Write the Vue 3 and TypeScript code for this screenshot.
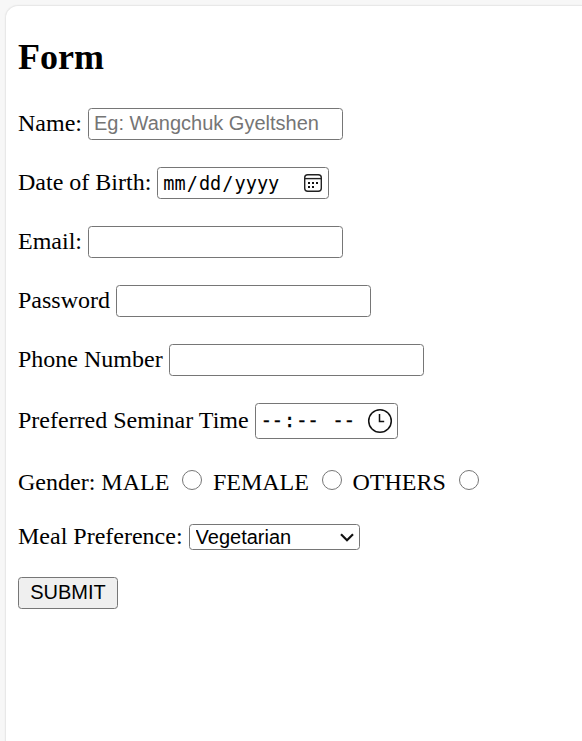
<script setup lang="ts">
import { ref } from 'vue'

interface TextField {
  id: string
  label: string
  type: string
}

const name = ref('')
const gender = ref('')
const meal = ref('Vegetarian')
const values = ref<Record<string, string>>({ email: '', password: '', phone: '' })

const fields: TextField[] = [
  { id: 'email', label: 'Email:', type: 'email' },
  { id: 'password', label: 'Password', type: 'password' },
  { id: 'phone', label: 'Phone Number', type: 'tel' },
]
const genders = ['MALE', 'FEMALE', 'OTHERS']
</script>

<template>
  <main class="page">
    <form class="card" @submit.prevent>
      <h2 class="title">Form</h2>

      <div class="row">
        <label class="caption" for="name">Name:</label>
        <input id="name" v-model="name" class="box text" type="text" placeholder="Eg: Wangchuk Gyeltshen" />
      </div>

      <div class="row">
        <label class="caption">Date of Birth:</label>
        <div class="box date">
          <span class="part">mm</span><span>/</span><span class="part">dd</span><span>/</span><span class="part">yyyy</span>
          <svg class="calendar" viewBox="0 0 20 20" width="20" height="20">
            <rect x="1.7" y="1.7" width="16.6" height="16.6" rx="3" fill="none" stroke="#222" stroke-width="1.4" />
            <path d="M2 5.6H18" stroke="#222" stroke-width="1.4" />
            <g fill="#111">
              <rect x="5" y="9" width="2" height="2" />
              <rect x="9" y="9" width="2" height="2" />
              <rect x="13" y="9" width="2" height="2" />
              <rect x="5" y="13" width="2" height="2" />
              <rect x="9" y="13" width="2" height="2" />
            </g>
          </svg>
        </div>
      </div>

      <div v-for="field in fields" :key="field.id" class="row">
        <label class="caption" :for="field.id">{{ field.label }}</label>
        <input :id="field.id" v-model="values[field.id]" class="box text" :type="field.type" />
      </div>

      <div class="row time-row">
        <label class="caption">Preferred Seminar Time</label>
        <div class="box time">
          <span class="part">--</span><span>:</span><span class="part">--</span><span class="part meridiem">--</span>
          <svg class="clock" viewBox="0 0 26 26" width="26" height="26">
            <circle cx="13" cy="13" r="11.3" fill="none" stroke="#111" stroke-width="1.5" />
            <path d="M12.5 6V13.5H17.2" fill="none" stroke="#111" stroke-width="1.5" />
          </svg>
        </div>
      </div>

      <div class="row gender-row">
        <span>Gender:</span>
        <label v-for="option in genders" :key="option" class="option">
          {{ option }}
          <input v-model="gender" class="radio" type="radio" name="gender" :value="option" />
        </label>
      </div>

      <div class="row meal-row">
        <label class="caption" for="meal">Meal Preference:</label>
        <div class="select-wrap">
          <select id="meal" v-model="meal" class="box select">
            <option>Vegetarian</option>
            <option>Non-Vegetarian</option>
          </select>
          <svg class="chevron" viewBox="0 0 14 10" width="14" height="10">
            <path d="M1 1.3L7 7.3L13 1.3" fill="none" stroke="#111" stroke-width="2.2" />
          </svg>
        </div>
      </div>

      <div class="row">
        <button class="box submit" type="submit">SUBMIT</button>
      </div>
    </form>
  </main>
</template>

<style>
body {
  background: #f7f7f7;
}
</style>

<style scoped>
.page {
  box-sizing: border-box;
  height: 741px;
  padding: 5px 0 0 5px;
  overflow: hidden;
  font-family: "Liberation Serif", "Times New Roman", serif;
  font-size: 24px;
  color: #000;
}
.card {
  box-sizing: border-box;
  display: flex;
  flex-direction: column;
  gap: 27px;
  height: 760px;
  padding: 31px 0 0 12px;
  background: #fff;
  border: 1px solid #e8e8e8;
  border-right: 0;
  border-radius: 13px 0 0 0;
  box-shadow: 0 0 2px rgba(0, 0, 0, 0.05);
}
.title {
  margin: 0 0 3px;
  height: 41px;
  font-size: 36px;
  line-height: 41px;
}
.row {
  display: flex;
  align-items: center;
  gap: 6px;
  height: 32px;
  flex: none;
  line-height: 28px;
  white-space: nowrap;
}
.caption {
  padding-bottom: 2px;
}
.box {
  box-sizing: border-box;
  margin: 0;
  border: 1px solid #767676;
  border-radius: 3.5px;
  background: #fff;
  color: #000;
  outline: none;
}
.text {
  width: 255px;
  height: 32px;
  padding: 0 5px 1px;
  font: 20px "Liberation Sans", Arial, sans-serif;
}
.text::placeholder {
  color: #757575;
}
.date,
.time {
  display: flex;
  align-items: center;
  font-family: "DejaVu Sans Mono", monospace;
  font-size: 18.6px;
}
.part {
  padding: 0 1px;
}
.date {
  width: 172px;
  height: 32px;
  padding: 1px 5px 0 4px;
}
.calendar {
  margin: -1px 0 0 auto;
}
.time-row {
  height: 36px;
}
.time {
  width: 143px;
  height: 36px;
  padding: 0 4px;
  -webkit-text-stroke: 0.4px #000;
}
.meridiem {
  margin-left: 12px;
}
.clock {
  margin-left: auto;
}
.gender-row {
  height: 31px;
}
.option {
  display: flex;
  align-items: center;
  gap: 13px;
}
.option + .option {
  margin-left: 4.6px;
}
.radio {
  appearance: none;
  box-sizing: border-box;
  width: 20px;
  height: 20px;
  margin: -4px 0 0;
  border: 1.5px solid #767676;
  border-radius: 50%;
  background: #fff;
}
.radio:checked {
  box-shadow: inset 0 0 0 3px #fff;
  background: #0075ff;
}
.meal-row {
  height: 26px;
}
.select-wrap {
  position: relative;
  display: flex;
}
.select {
  appearance: none;
  width: 171px;
  height: 26px;
  padding: 0 6px;
  font: 20px "Liberation Sans", Arial, sans-serif;
}
.chevron {
  position: absolute;
  top: 9px;
  right: 6px;
  pointer-events: none;
}
.submit {
  width: 100px;
  height: 32px;
  padding: 0 0 2px;
  background: #efefef;
  font: 20px "Liberation Sans", Arial, sans-serif;
}
</style>
